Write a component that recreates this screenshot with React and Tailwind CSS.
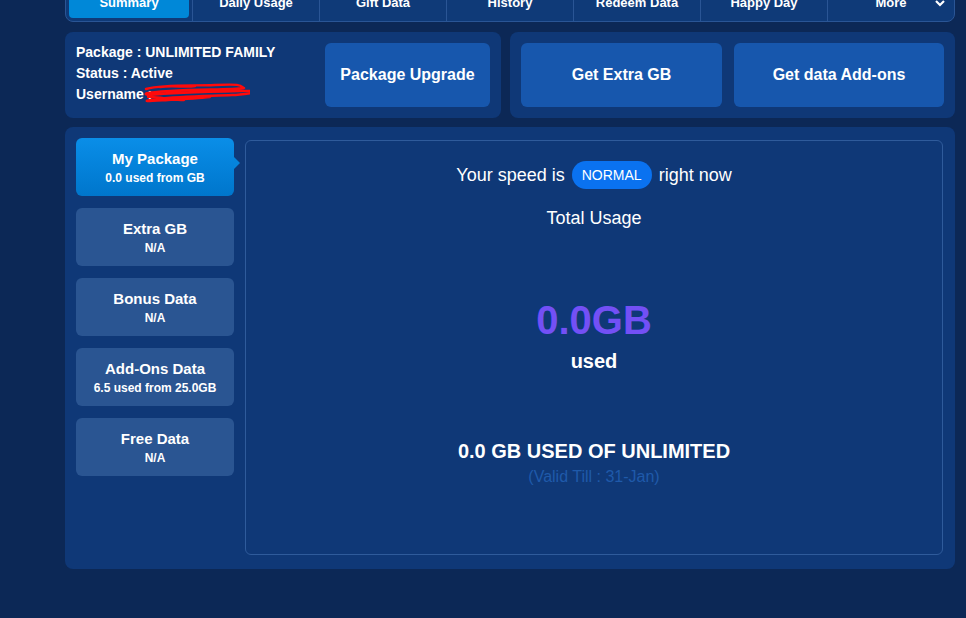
import React from "react";

const tabs = ["Summary", "Daily Usage", "Gift Data", "History", "Redeem Data", "Happy Day", "More"];

const items = [
  { title: "My Package", sub: "0.0 used from GB", active: true },
  { title: "Extra GB", sub: "N/A" },
  { title: "Bonus Data", sub: "N/A" },
  { title: "Add-Ons Data", sub: "6.5 used from 25.0GB" },
  { title: "Free Data", sub: "N/A" },
];

// red pen scribble hiding the username
function Scribble() {
  return (
    <svg width="110" height="22" viewBox="0 0 110 22" className="absolute left-[64px] top-[-2px]">
      <path
        d="M6 7 C25 2 50 4 75 3 S100 3 104 6 C90 8 60 7 30 9 S5 12 8 13 C30 11 60 10 100 9 S98 13 92 13 C70 14 40 14 18 17 S10 19 28 18 C45 17 60 16 70 15 M20 5 C35 3 45 6 55 4 M8 15 C20 14 30 19 44 18"
        stroke="#ff0a0a"
        strokeWidth="2.4"
        fill="none"
        strokeLinecap="round"
        strokeLinejoin="round"
      />
    </svg>
  );
}

export default function App() {
  return (
    <div
      className="min-h-[618px] w-full bg-[#0c2856] overflow-hidden"
      style={{ fontFamily: '"Liberation Sans", Arial, sans-serif' }}
    >
      <div className="ml-[65px] w-[890px] -mt-[16px]">
        {/* tabs */}
        <div className="flex h-[38px] bg-[#0f3a78] border border-[#2a5595] rounded-b-[8px]">
          {tabs.map((t, i) => (
            <div
              key={t}
              className={`flex-1 flex items-center justify-center text-white font-bold text-[13px] ${
                i > 0 ? "border-l border-[#2a5595]" : ""
              }`}
            >
              {i === 0 ? (
                <div className="m-[3px] w-full h-[29px] rounded-[4px] bg-[#0088d8] flex items-center justify-center">
                  {t}
                </div>
              ) : i === tabs.length - 1 ? (
                <div className="relative w-full flex items-center justify-center">
                  {t}
                  <svg width="12" height="12" viewBox="0 0 12 12" className="absolute right-[8px]">
                    <path d="M2 4 L6 8 L10 4" stroke="white" strokeWidth="2.2" fill="none" />
                  </svg>
                </div>
              ) : (
                t
              )}
            </div>
          ))}
        </div>

        {/* top row */}
        <div className="flex gap-[9px] mt-[10px]">
          <div className="w-[436px] h-[86px] bg-[#0f3877] rounded-[8px] flex items-center pl-[11px] pr-[11px]">
            <div className="flex-1 text-white font-bold text-[14px] leading-[21px] -mt-[4px]">
              <div>Package : UNLIMITED FAMILY</div>
              <div>Status : Active</div>
              <div className="relative">
                Username :
                <Scribble />
              </div>
            </div>
            <button className="w-[165px] h-[64px] rounded-[6px] bg-[#1757ad] text-white font-bold text-[16px]">
              Package Upgrade
            </button>
          </div>
          <div className="flex-1 h-[86px] bg-[#0f3877] rounded-[8px] flex items-center gap-[12px] px-[11px]">
            <button className="w-[201px] h-[64px] rounded-[6px] bg-[#1757ad] text-white font-bold text-[16px]">
              Get Extra GB
            </button>
            <button className="flex-1 h-[64px] rounded-[6px] bg-[#1757ad] text-white font-bold text-[16px]">
              Get data Add-ons
            </button>
          </div>
        </div>

        {/* main */}
        <div className="mt-[9px] h-[442px] bg-[#0f3877] rounded-[8px] flex pt-[11px] pl-[11px] pr-[12px] pb-[14px] gap-[11px]">
          <div className="w-[158px] flex flex-col gap-[12px]">
            {items.map((it) => (
              <div
                key={it.title}
                className={`relative h-[58px] rounded-[6px] flex flex-col items-center justify-center text-white font-bold ${
                  it.active ? "bg-gradient-to-b from-[#0a8ee8] to-[#0076cc]" : "bg-[#2a5592]"
                }`}
              >
                <div className="text-[15px] leading-[19px]">{it.title}</div>
                <div className="text-[12px] leading-[16px] mt-[2px]">{it.sub}</div>
                {it.active && (
                  <div className="absolute right-[-6px] top-[19px] w-0 h-0 border-y-[6px] border-y-transparent border-l-[6px] border-l-[#0584dc]" />
                )}
              </div>
            ))}
          </div>
          <div className="flex-1 mt-[2px] border border-[#2f5b9b] rounded-[6px] flex flex-col items-center text-white">
            <div className="mt-[20px] flex items-center gap-[7px] text-[18px]">
              <span>Your speed is</span>
              <span className="h-[28px] px-[10px] rounded-full bg-[#0a72f0] text-[14px] flex items-center">NORMAL</span>
              <span>right now</span>
            </div>
            <div className="mt-[17px] text-[18px] leading-[24px]">Total Usage</div>
            <div className="mt-[68px] text-[40px] leading-[44px] font-bold text-[#7350f5]">0.0GB</div>
            <div className="mt-[7px] text-[20px] leading-[24px] font-bold">used</div>
            <div className="mt-[66px] text-[20px] leading-[24px] font-bold">0.0 GB USED OF UNLIMITED</div>
            <div className="mt-[4px] text-[16px] leading-[20px] text-[#1f5aaa]">(Valid Till : 31-Jan)</div>
          </div>
        </div>
      </div>
    </div>
  );
}
